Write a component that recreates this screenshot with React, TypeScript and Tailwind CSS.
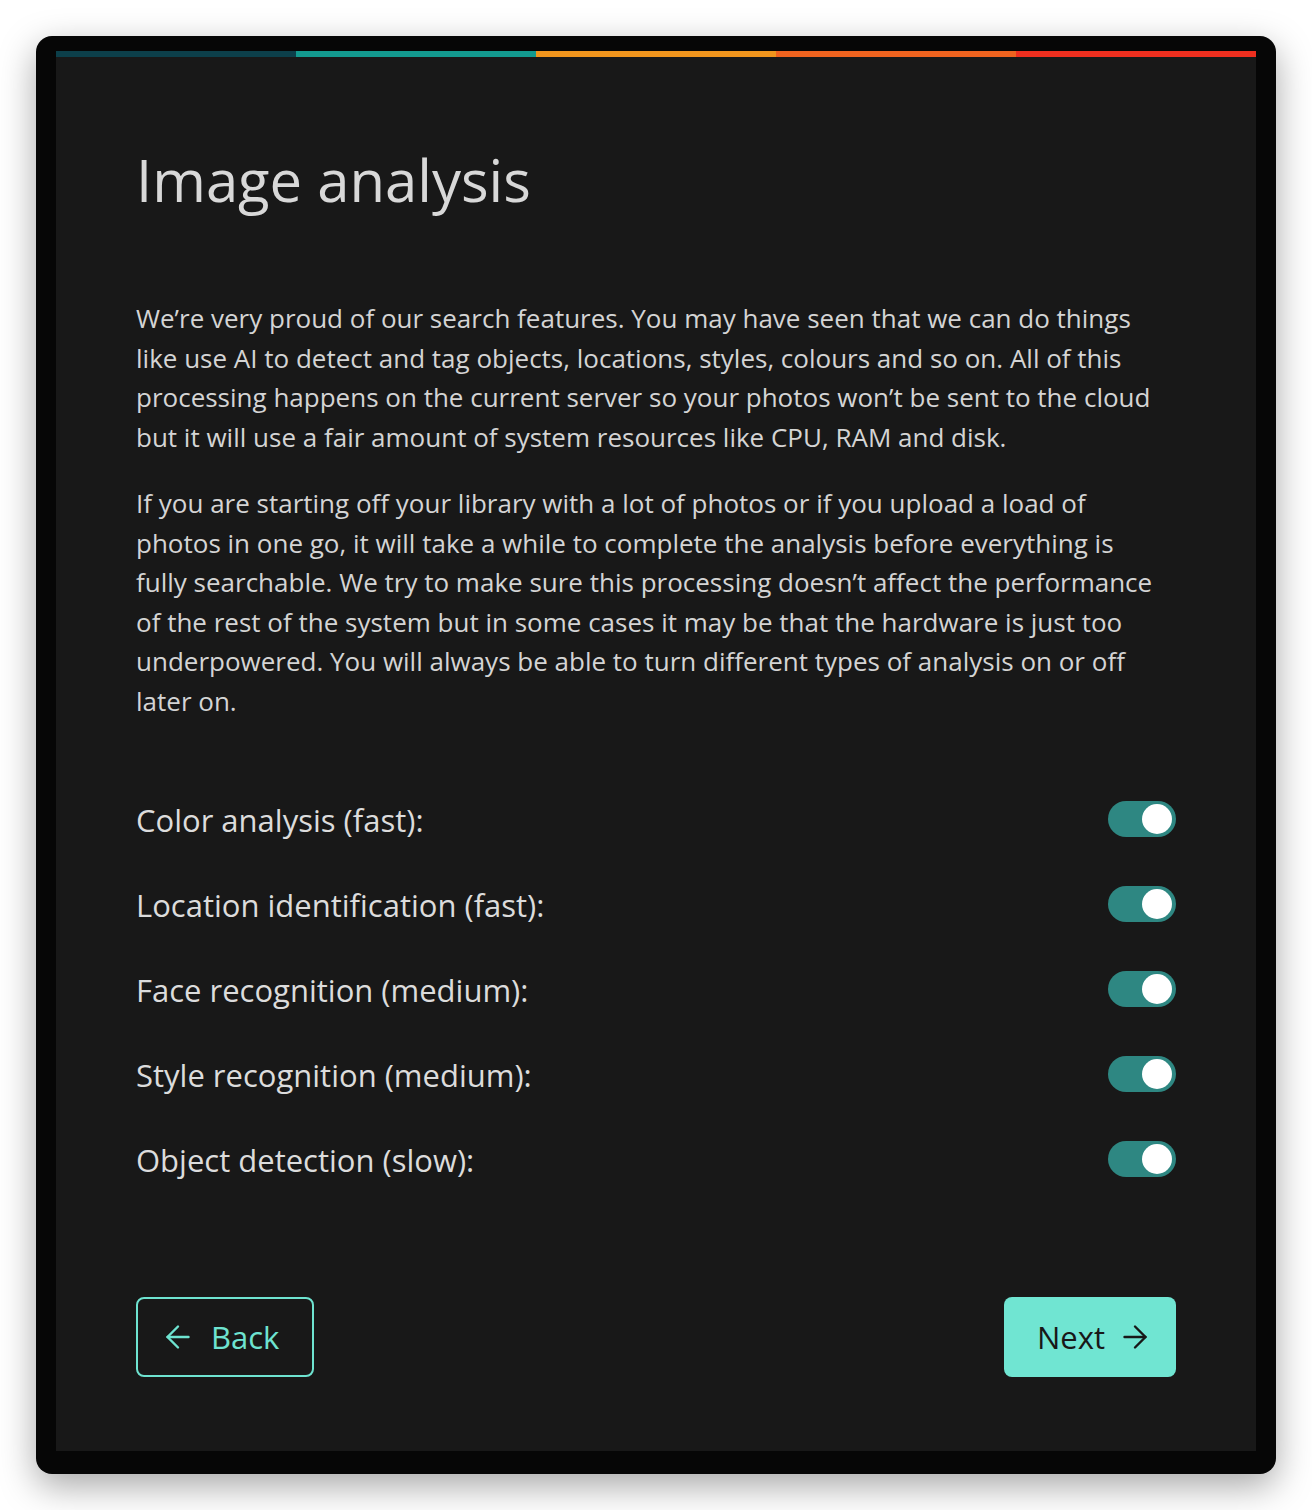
import React from "react";
import { ArrowLeft, ArrowRight } from "lucide-react";

const font = { fontFamily: "'Open Sans', 'Noto Sans', sans-serif" };

function Toggle() {
  return (
    <div className="w-[68px] h-[36px] rounded-full bg-[#2e8782] flex items-center justify-end pr-[4px]">
      <div className="w-[30px] h-[30px] rounded-full bg-white" />
    </div>
  );
}

const rows = [
  "Color analysis (fast):",
  "Location identification (fast):",
  "Face recognition (medium):",
  "Style recognition (medium):",
  "Object detection (slow):",
];

const para2 = [
  "If you are starting off your library with a lot of photos or if you upload a load of",
  "photos in one go, it will take a while to complete the analysis before everything is",
  "fully searchable. We try to make sure this processing doesn’t affect the performance",
  "of the rest of the system but in some cases it may be that the hardware is just too",
  "underpowered. You will always be able to turn different types of analysis on or off",
  "later on.",
];

export default function App() {
  return (
    <div className="min-h-[1510px] bg-white pt-[36px] px-[36px]" style={font}>
      <div className="w-[1240px] h-[1438px] bg-[#060606] rounded-[16px] pt-[15px] px-[20px] pb-[23px] shadow-[0_12px_36px_rgba(0,0,0,0.35)]">
        <div className="h-full bg-[#181818] flex flex-col">
          <div className="flex h-[6px] shrink-0">
            <div className="flex-1 bg-[#0c3f4a]" />
            <div className="flex-1 bg-[#139a8f]" />
            <div className="flex-1 bg-[#f0951d]" />
            <div className="flex-1 bg-[#ef631f]" />
            <div className="flex-1 bg-[#ee2f1f]" />
          </div>
          <div className="px-[80px] pt-[88px] pb-[74px] flex flex-col flex-1">
            <h1 className="text-[58px] leading-[70px] text-[#d8d8d8] font-normal">Image analysis</h1>
            <p className="mt-[84px] text-[26px] leading-[39.5px] text-[#d4d4d4]">
              We’re very proud of our search features. You may have seen that we can do things like use AI to detect and tag objects, locations, styles, colours and so on. All of this processing happens on the current server so your photos won’t be sent to the cloud but it will use a fair amount of system resources like CPU, RAM and disk.
            </p>
            <p className="mt-[27px] text-[26px] leading-[39.5px] text-[#d4d4d4]">
              {para2.map((l) => (
                <span key={l} className="block whitespace-nowrap">{l}</span>
              ))}
            </p>
            <div className="mt-[55px] flex flex-col">
              {rows.map((r) => (
                <div key={r} className="h-[85px] flex items-center justify-between">
                  <span className="text-[31px] text-[#dcdcdc] pt-[4px]">{r}</span>
                  <Toggle />
                </div>
              ))}
            </div>
            <div className="mt-auto flex justify-between">
              <button className="h-[80px] w-[178px] rounded-[8px] border-2 border-[#6ee3d0] flex items-center justify-start pl-[22px] gap-[15px] text-[#6ee3d0] text-[31px]">
                <ArrowLeft size={36} strokeWidth={1.6} />
                <span>Back</span>
              </button>
              <button className="h-[80px] w-[172px] rounded-[8px] bg-[#70e5d2] flex items-center justify-start pl-[33px] gap-[12px] text-[#181818] text-[31px]">
                <span>Next</span>
                <ArrowRight size={36} strokeWidth={1.6} />
              </button>
            </div>
          </div>
        </div>
      </div>
    </div>
  );
}
